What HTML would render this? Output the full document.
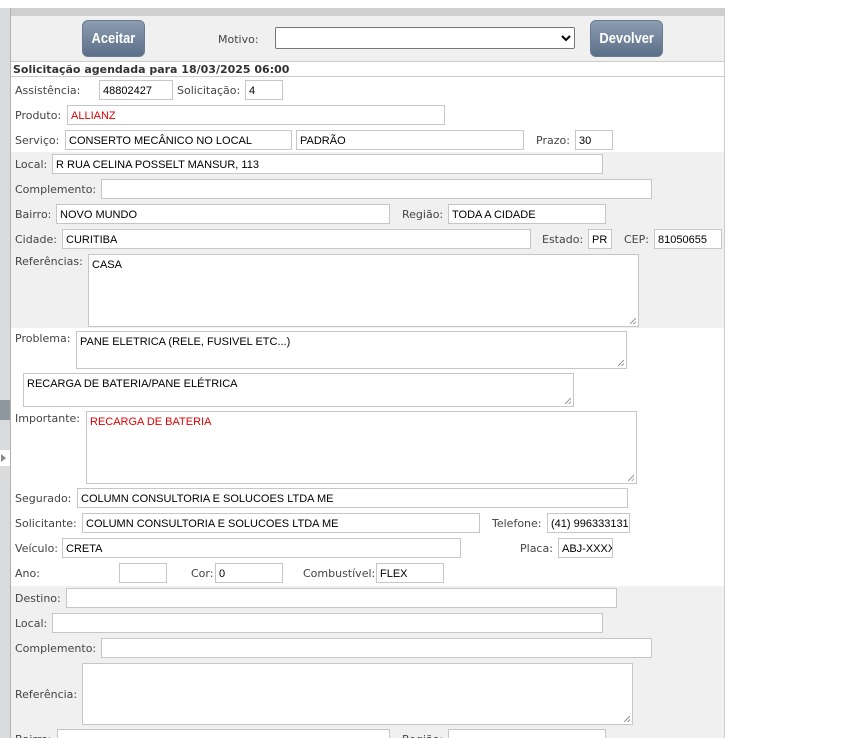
<!DOCTYPE html>
<html><head><meta charset="utf-8"><style>
*{box-sizing:border-box;margin:0;padding:0}
html,body{width:853px;height:738px;overflow:hidden}
body{background:#fff;position:relative;font-family:"DejaVu Sans","Liberation Sans",sans-serif;font-size:11px;color:#444}
.a{position:absolute}
.l{position:absolute;line-height:14px;white-space:nowrap;margin-top:1px}
.b{position:absolute;background:#fff;border:1px solid #c6c6c6;height:20px;font-family:"Liberation Sans",sans-serif;font-size:11px;color:#000;padding:4px 3px 2px;line-height:13px;white-space:nowrap;overflow:hidden}
.t{height:auto}
.r{color:#e00000}
.btn{position:absolute;border-radius:6px;background:linear-gradient(#8d9db2,#5b6f88);color:#fff;font-family:"Liberation Sans",sans-serif;font-weight:bold;font-size:15px;text-align:center;line-height:36px;border:1px solid #6a7b90}
.btn span{display:inline-block;transform:scaleX(0.86)}
.rz{position:absolute;right:2px;bottom:2px;width:6px;height:6px;background:linear-gradient(135deg,transparent 45%,#999 45%,#999 55%,transparent 55%,transparent 75%,#999 75%,#999 85%,transparent 85%)}
</style></head><body>
<div class="a" style="left:0;top:8px;width:11px;height:730px;background:#d9dbdd;border-right:1px solid #b0b0b0"></div>
<div class="a" style="left:0;top:400px;width:10px;height:20px;background:#8f969c"></div>
<div class="a" style="left:0;top:450px;width:10px;height:16px;background:#fff"></div>
<div class="a" style="left:1px;top:454px;width:0;height:0;border-left:5px solid #888;border-top:4px solid transparent;border-bottom:4px solid transparent"></div>
<div class="a" style="left:11px;top:8px;width:714px;height:8px;background:#cfcfcf"></div>
<div class="a" style="left:724px;top:8px;width:1px;height:730px;background:#ccc"></div>
<div class="a" style="left:11px;top:16px;width:713px;height:46px;background:#f0f0f0;border-bottom:1px solid #ccc"></div>
<div class="a" style="left:11px;top:76px;width:713px;height:1px;background:#ccc"></div>
<div class="a" style="left:11px;top:152px;width:713px;height:176px;background:#f0f0f0"></div>
<div class="a" style="left:11px;top:586px;width:713px;height:152px;background:#f0f0f0"></div>

<div class="btn" style="left:82px;top:20px;width:63px;height:37px"><span>Aceitar</span></div>
<div class="btn" style="left:590px;top:20px;width:73px;height:37px"><span>Devolver</span></div>
<div class="l" style="left:218px;top:32px">Motivo:</div>
<div class="b" style="left:275px;top:27px;width:300px;height:22px;border-color:#767676;border-radius:2px"></div>
<svg class="a" style="left:561px;top:34px" width="10" height="8"><path d="M1 2 L5 6 L9 2" stroke="#000" stroke-width="2" fill="none"/></svg>
<div class="l" style="left:13px;top:62px;font-weight:bold;color:#333">Solicitação agendada para 18/03/2025 06:00</div>

<div class="l" style="left:15px;top:83px">Assistência:</div><div class="b" style="left:99px;top:80px;width:74px">48802427</div>
<div class="l" style="left:177px;top:83px">Solicitação:</div><div class="b" style="left:245px;top:80px;width:38px">4</div>
<div class="l" style="left:15px;top:108px">Produto:</div><div class="b r" style="left:67px;top:105px;width:378px">ALLIANZ</div>
<div class="l" style="left:15px;top:133px">Serviço:</div><div class="b" style="left:65px;top:130px;width:227px">CONSERTO MECÂNICO NO LOCAL</div>
<div class="b" style="left:296px;top:130px;width:228px">PADRÃO</div>
<div class="l" style="left:536px;top:133px">Prazo:</div><div class="b" style="left:575px;top:130px;width:38px">30</div>

<div class="l" style="left:15px;top:157px">Local:</div><div class="b" style="left:52px;top:154px;width:551px">R RUA CELINA POSSELT MANSUR, 113</div>
<div class="l" style="left:15px;top:182px">Complemento:</div><div class="b" style="left:101px;top:179px;width:551px"></div>
<div class="l" style="left:15px;top:207px">Bairro:</div><div class="b" style="left:56px;top:204px;width:334px">NOVO MUNDO</div>
<div class="l" style="left:402px;top:207px">Região:</div><div class="b" style="left:448px;top:204px;width:158px">TODA A CIDADE</div>
<div class="l" style="left:15px;top:232px">Cidade:</div><div class="b" style="left:62px;top:229px;width:469px">CURITIBA</div>
<div class="l" style="left:542px;top:232px">Estado:</div><div class="b" style="left:588px;top:229px;width:24px">PR</div>
<div class="l" style="left:624px;top:232px">CEP:</div><div class="b" style="left:654px;top:229px;width:68px">81050655</div>
<div class="l" style="left:15px;top:254px">Referências:</div><div class="b t" style="left:88px;top:254px;width:551px;height:73px">CASA<div class="rz"></div></div>

<div class="l" style="left:15px;top:331px">Problema:</div><div class="b t" style="left:76px;top:331px;width:551px;height:38px">PANE ELETRICA (RELE, FUSIVEL ETC...)<div class="rz"></div></div>
<div class="b t" style="left:23px;top:373px;width:551px;height:34px">RECARGA DE BATERIA/PANE ELÉTRICA<div class="rz"></div></div>
<div class="l" style="left:15px;top:411px">Importante:</div><div class="b t r" style="left:86px;top:411px;width:551px;height:73px">RECARGA DE BATERIA<div class="rz"></div></div>

<div class="l" style="left:15px;top:491px">Segurado:</div><div class="b" style="left:77px;top:488px;width:551px">COLUMN CONSULTORIA E SOLUCOES LTDA ME</div>
<div class="l" style="left:15px;top:516px">Solicitante:</div><div class="b" style="left:82px;top:513px;width:398px">COLUMN CONSULTORIA E SOLUCOES LTDA ME</div>
<div class="l" style="left:492px;top:516px">Telefone:</div><div class="b" style="left:547px;top:513px;width:83px">(41) 996333131</div>
<div class="l" style="left:15px;top:541px">Veículo:</div><div class="b" style="left:62px;top:538px;width:399px">CRETA</div>
<div class="l" style="left:520px;top:541px">Placa:</div><div class="b" style="left:558px;top:538px;width:55px">ABJ-XXXX</div>
<div class="l" style="left:15px;top:566px">Ano:</div><div class="b" style="left:119px;top:563px;width:48px"></div>
<div class="l" style="left:191px;top:566px">Cor:</div><div class="b" style="left:215px;top:563px;width:68px">0</div>
<div class="l" style="left:303px;top:566px">Combustível:</div><div class="b" style="left:376px;top:563px;width:68px">FLEX</div>

<div class="l" style="left:15px;top:591px">Destino:</div><div class="b" style="left:66px;top:588px;width:551px"></div>
<div class="l" style="left:15px;top:616px">Local:</div><div class="b" style="left:52px;top:613px;width:551px"></div>
<div class="l" style="left:15px;top:641px">Complemento:</div><div class="b" style="left:101px;top:638px;width:551px"></div>
<div class="l" style="left:15px;top:687px">Referência:</div><div class="b t" style="left:82px;top:663px;width:551px;height:62px"><div class="rz"></div></div>
<div class="l" style="left:15px;top:732px">Bairro:</div><div class="b" style="left:57px;top:729px;width:333px"></div>
<div class="l" style="left:402px;top:732px">Região:</div><div class="b" style="left:448px;top:729px;width:158px"></div>
</body></html>
